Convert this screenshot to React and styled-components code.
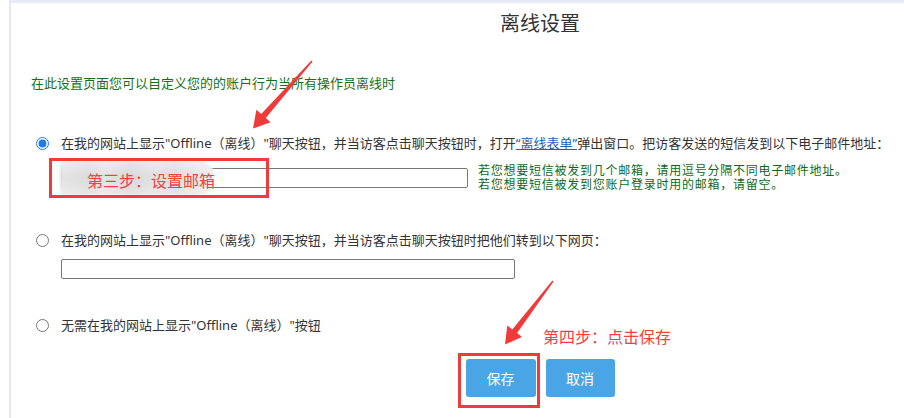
import React from "react";
import styled, { createGlobalStyle } from "styled-components";

const GlobalStyle = createGlobalStyle`
  html, body { margin: 0; padding: 0; background: #ffffff; }
  body { font-family: "Noto Sans", "Noto Sans CJK SC", sans-serif; color: #333; }
  * { box-sizing: border-box; }
`;

const Page = styled.div`
  position: relative;
  width: 904px;
  height: 418px;
  overflow: hidden;
  background: #fff;
`;

const Panel = styled.div`
  margin-left: 9px;
  height: 418px;
  border-top: 3px solid #e6ebf6;
  border-left: 2px solid #e3e8f6;
  padding: 9px 0 0 20px;
  display: flex;
  flex-direction: column;
`;

const Title = styled.h1`
  margin: 0;
  padding-left: 145px;
  text-align: center;
  font-size: 20px;
  line-height: 24px;
  font-weight: 400;
  color: #333;
`;

const Intro = styled.p`
  margin: 38px 0 0;
  font-size: 13px;
  line-height: 18px;
  color: #16701a;
`;

const Option = styled.div`
  margin-top: ${(p) => p.$gap}px;
  display: flex;
  flex-direction: column;
`;

const Row = styled.label`
  display: flex;
  align-items: center;
  font-size: 13px;
  line-height: 18px;
  color: #333;
`;

const Radio = styled.input.attrs({ type: "radio", name: "offline" })`
  width: 13px;
  height: 13px;
  margin: 0 12px 0 5px;
  accent-color: #1d7de8;
`;

const FormLink = styled.a`
  color: #1d5fb8;
  text-decoration: underline;
`;

const SubRow = styled.div`
  margin-top: ${(p) => p.$gap}px;
  margin-left: 30px;
  display: flex;
  align-items: flex-start;
  gap: 10px;
`;

const TextInput = styled.input.attrs({ type: "text" })`
  width: ${(p) => p.$w}px;
  height: 20px;
  margin-top: ${(p) => p.$top || 0}px;
  border: 1px solid #777;
  border-radius: 2px;
  padding: 0 4px;
  font-size: 13px;
  outline: none;
  background: #fff;
`;

const Hint = styled.div`
  display: flex;
  flex-direction: column;
  font-size: 12px;
  letter-spacing: 0.75px;
  line-height: 14px;
  color: #12681a;
  white-space: nowrap;
`;

const Buttons = styled.div`
  margin-top: 25px;
  padding-left: 145px;
  display: flex;
  justify-content: center;
  gap: 10px;
`;

const Button = styled.button`
  width: ${(p) => p.$w}px;
  height: 38px;
  border: none;
  border-radius: 3px;
  background: #4aa5e6;
  color: #fff;
  font-family: "Noto Sans CJK SC", sans-serif;
  font-size: 14px;
  padding: 0;
`;

/* ---- annotation overlay (drawn on top of the screenshot) ---- */
const Overlay = styled.div`
  position: absolute;
  inset: 0;
  pointer-events: none;
`;

const Smudge = styled.div`
  position: absolute;
  left: 60px;
  top: 161px;
  width: 154px;
  height: 34px;
  border-radius: 4px 14px 14px 4px;
  background:
    linear-gradient(180deg, rgba(255,255,255,0.25), rgba(0,0,0,0.02) 50%, rgba(255,255,255,0.2)),
    linear-gradient(90deg, #e8e8e8 0%, #dfdfdf 18%, #e7e7e7 30%, #dcdcdc 45%, #e4e4e4 60%, #e0e0e0 75%, #ebebeb 90%, #f2f2f2 100%);
  filter: blur(0.8px);
`;

const RedBox = styled.div`
  position: absolute;
  left: ${(p) => p.$x}px;
  top: ${(p) => p.$y}px;
  width: ${(p) => p.$w}px;
  height: ${(p) => p.$h}px;
  border: 3px solid #f23a3a;
`;

const RedNote = styled.div`
  position: absolute;
  left: ${(p) => p.$x}px;
  top: ${(p) => p.$y}px;
  font-family: "Noto Sans CJK SC", sans-serif;
  font-size: 16px;
  line-height: 22px;
  color: #f23f3f;
  white-space: nowrap;
`;

const ArrowLayer = styled.svg`
  position: absolute;
  left: 0;
  top: 0;
`;

export default function App() {
  return (
    <>
      <GlobalStyle />
      <Page>
        <Panel>
          <Title>离线设置</Title>
          <Intro>在此设置页面您可以自定义您的的账户行为当所有操作员离线时</Intro>

          <Option $gap={42}>
            <Row>
              <Radio defaultChecked />
              <span>
                在我的网站上显示"Offline（离线）"聊天按钮，并当访客点击聊天按钮时，打开
                <FormLink href="#">“离线表单”</FormLink>
                弹出窗口。把访客发送的短信发到以下电子邮件地址：
              </span>
            </Row>
            <SubRow $gap={12}>
              <TextInput $w={407} $top={4} />
              <Hint>
                <span>若您想要短信被发到几个邮箱，请用逗号分隔不同电子邮件地址。</span>
                <span>若您想要短信被发到您账户登录时用的邮箱，请留空。</span>
              </Hint>
            </SubRow>
          </Option>

          <Option $gap={39}>
            <Row>
              <Radio />
              <span>在我的网站上显示"Offline（离线）"聊天按钮，并当访客点击聊天按钮时把他们转到以下网页：</span>
            </Row>
            <SubRow $gap={10}>
              <TextInput $w={454} />
            </SubRow>
          </Option>

          <Option $gap={37}>
            <Row>
              <Radio />
              <span>无需在我的网站上显示"Offline（离线）"按钮</span>
            </Row>
          </Option>

          <Buttons>
            <Button $w={70}>保存</Button>
            <Button $w={69}>取消</Button>
          </Buttons>
        </Panel>

        <Overlay>
          <Smudge />
          <RedBox $x={49} $y={158} $w={220} $h={40} />
          <RedNote $x={87} $y={169}>第三步：设置邮箱</RedNote>
          <RedBox $x={458} $y={353} $w={82} $h={55} />
          <RedNote $x={543} $y={325}>第四步：点击保存</RedNote>
          <ArrowLayer width="904" height="418" viewBox="0 0 904 418">
            <polygon
              fill="#f23a3a"
              points="312.6,61.5 265.8,117.9 270.6,122.2 253,128.5 256.4,109.7 261.2,113.9 311.4,60.5"
            />
            <polygon
              fill="#f23a3a"
              points="553.6,281.5 517.1,333.0 521.9,336.9 505,344.5 507.3,325.5 512.3,329.4 552.4,280.5"
            />
          </ArrowLayer>
        </Overlay>
      </Page>
    </>
  );
}
